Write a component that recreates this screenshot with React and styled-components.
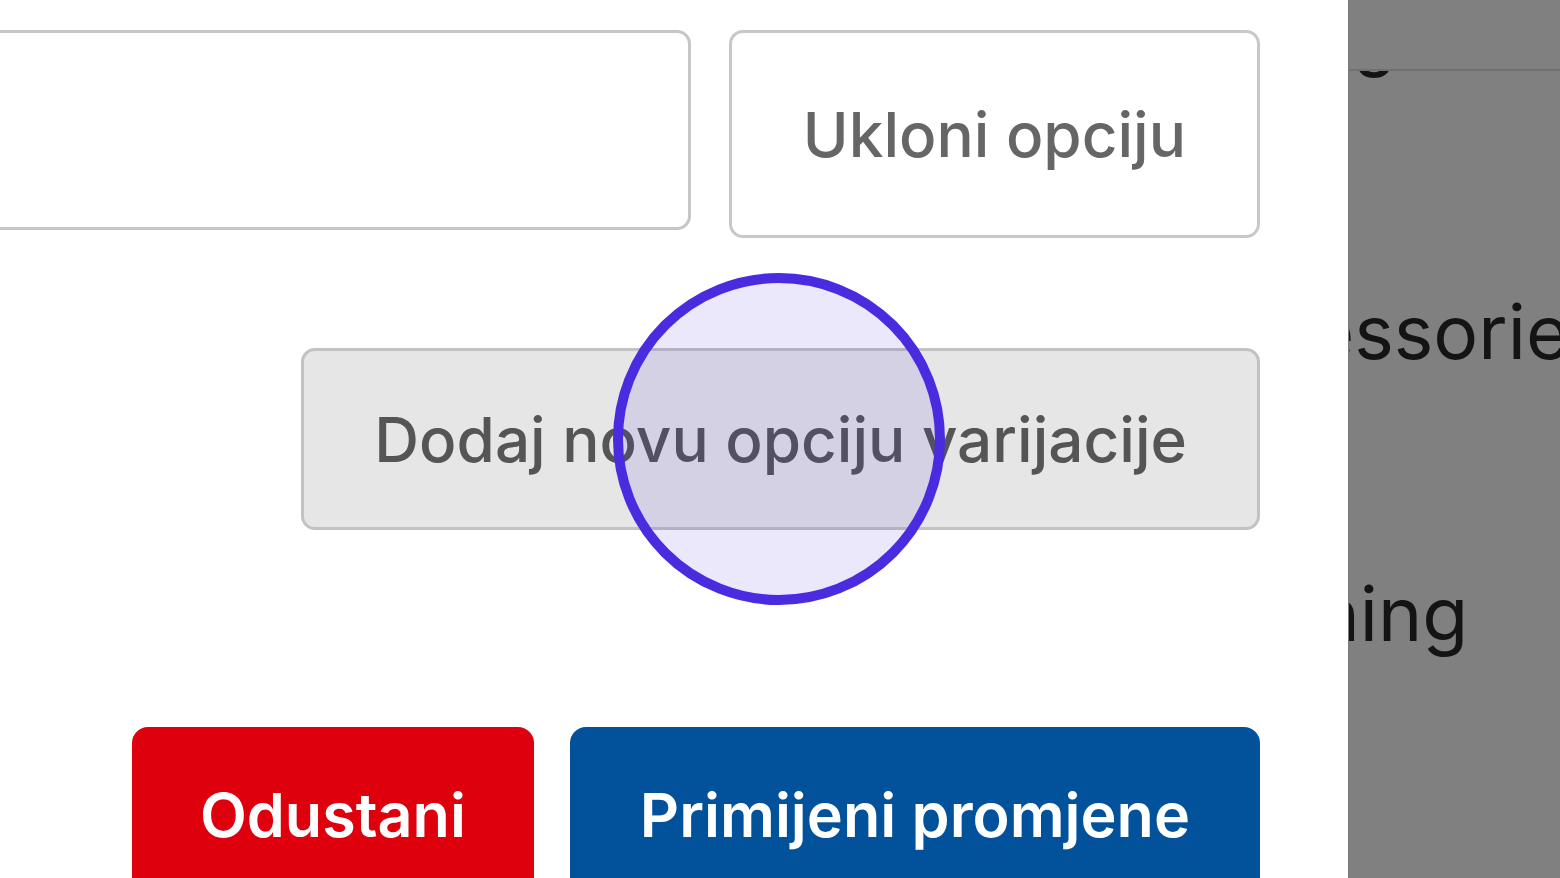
import React from 'react';
import styled, { createGlobalStyle } from 'styled-components';

const GlobalStyle = createGlobalStyle`
  html, body {
    margin: 0;
    padding: 0;
    overflow: hidden;
    background: #ffffff;
  }
  * {
    box-sizing: border-box;
  }
`;

const Page = styled.div`
  display: flex;
  width: 1560px;
  height: 878px;
  overflow: hidden;
  font-family: Inter, "Noto Sans", sans-serif;
`;

const Panel = styled.div`
  position: relative;
  flex: none;
  width: 1348px;
  height: 100%;
  background: #ffffff;
  padding: 30px 88px 0 0;
`;

const OptionRow = styled.div`
  display: flex;
  align-items: flex-start;
  gap: 38px;
  margin-left: -40px;
`;

const OptionInput = styled.div`
  flex: 1;
  height: 200px;
  border: 3px solid #c6c6c6;
  border-radius: 14px;
  background: #ffffff;
`;

const ButtonRow = styled.div`
  display: flex;
  justify-content: flex-end;
  gap: 36px;
  margin-top: ${(p) => p.$gap}px;
`;

const GrayButton = styled.button`
  height: ${(p) => p.$height}px;
  padding: 0 ${(p) => p.$pad}px;
  border: 3px solid ${(p) => (p.$filled ? '#c2c2c2' : '#c8c8c8')};
  border-radius: 14px;
  background: ${(p) => (p.$filled ? '#e6e6e6' : '#ffffff')};
  color: ${(p) => (p.$filled ? '#555555' : '#666666')};
  font-family: inherit;
  font-size: 62px;
  font-weight: 500;
  white-space: nowrap;
`;

const ActionButton = styled.button`
  height: 176px;
  padding: 0 ${(p) => (p.$danger ? 68 : 70)}px;
  border: none;
  border-radius: 16px;
  background: ${(p) => (p.$danger ? '#df000e' : '#01529b')};
  color: #ffffff;
  font-family: inherit;
  font-size: 61px;
  font-weight: 600;
  white-space: nowrap;
`;

const Cursor = styled.div`
  position: absolute;
  left: 613px;
  top: 273px;
  width: 332px;
  height: 332px;
  border-radius: 50%;
  border: 10px solid #4a2be0;
  background: rgba(75, 45, 225, 0.11);
  pointer-events: none;
`;

const Backdrop = styled.div`
  flex: 1;
  display: flex;
  flex-direction: column;
  background: #808080;
  border-left: 1px solid #7a7a7a;
  overflow: hidden;
`;

const BackdropHeader = styled.div`
  flex: none;
  height: 71px;
  border-bottom: 2px solid #717171;
`;

const CategoryList = styled.div`
  flex: 1;
  overflow: hidden;
`;

const Category = styled.div`
  height: 282px;
  line-height: 282px;
  margin-left: -176px;
  font-size: 75px;
  color: #141414;
  white-space: nowrap;
  &:first-child {
    margin-top: -162px;
  }
`;

export default function App() {
  return (
    <>
      <GlobalStyle />
      <Page>
        <Panel>
          <OptionRow>
            <OptionInput />
            <GrayButton $height={208} $pad={71}>Ukloni opciju</GrayButton>
          </OptionRow>
          <ButtonRow $gap={110}>
            <GrayButton $filled $height={182} $pad={70}>
              Dodaj novu opciju varijacije
            </GrayButton>
          </ButtonRow>
          <ButtonRow $gap={197}>
            <ActionButton $danger>Odustani</ActionButton>
            <ActionButton>Primijeni promjene</ActionButton>
          </ButtonRow>
          <Cursor />
        </Panel>
        <Backdrop>
          <BackdropHeader />
          <CategoryList>
            <Category>Shoes</Category>
            <Category>Accessories</Category>
            <Category>Clothing</Category>
          </CategoryList>
        </Backdrop>
      </Page>
    </>
  );
}
